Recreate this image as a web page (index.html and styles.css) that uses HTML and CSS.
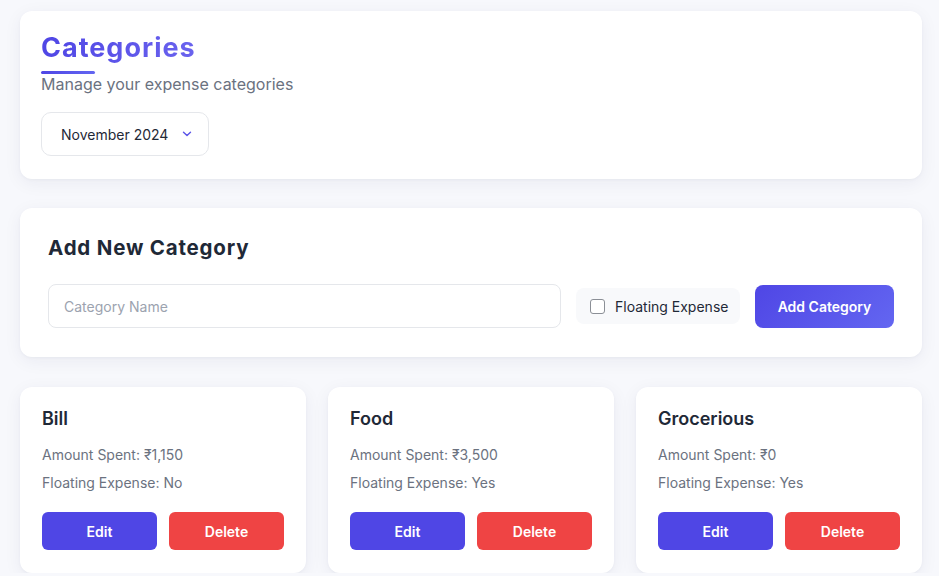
FILE: index.html
```html
<!DOCTYPE html>
<html lang="en">
<head>
<meta charset="utf-8">
<title>Categories</title>
<link rel="stylesheet" href="styles.css">
</head>
<body>
<main class="page">
  <section class="card header-card">
    <h1 class="page-title">Categories</h1>
    <div class="title-bar"></div>
    <p class="subtitle">Manage your expense categories</p>
    <div class="month-select">
      <span>November 2024</span>
      <svg class="chevron" width="10" height="6" viewBox="0 0 10 6"><path d="M1.5 1.2 L5 4.6 L8.5 1.2" fill="none" stroke="#5b54e8" stroke-width="1.4" stroke-linecap="round" stroke-linejoin="round"/></svg>
    </div>
  </section>

  <section class="card add-card">
    <h2 class="add-title">Add New Category</h2>
    <div class="add-row">
      <input class="name-input" type="text" placeholder="Category Name">
      <label class="float-toggle"><input type="checkbox" class="check"><span>Floating Expense</span></label>
      <button class="add-btn">Add Category</button>
    </div>
  </section>

  <section class="grid">
    <article class="card cat-card">
      <h3 class="cat-name">Bill</h3>
      <p class="cat-line">Amount Spent: ₹1,150</p>
      <p class="cat-line">Floating Expense: No</p>
      <div class="cat-actions"><button class="btn edit">Edit</button><button class="btn delete">Delete</button></div>
    </article>
    <article class="card cat-card">
      <h3 class="cat-name">Food</h3>
      <p class="cat-line">Amount Spent: ₹3,500</p>
      <p class="cat-line">Floating Expense: Yes</p>
      <div class="cat-actions"><button class="btn edit">Edit</button><button class="btn delete">Delete</button></div>
    </article>
    <article class="card cat-card">
      <h3 class="cat-name">Grocerious</h3>
      <p class="cat-line">Amount Spent: ₹0</p>
      <p class="cat-line">Floating Expense: Yes</p>
      <div class="cat-actions"><button class="btn edit">Edit</button><button class="btn delete">Delete</button></div>
    </article>
  </section>
</main>
</body>
</html>
```

FILE: styles.css
```css
* { box-sizing: border-box; }
html, body { margin: 0; padding: 0; }
body {
  background: #f7f8fc;
  font-family: Inter, "Noto Sans", "DejaVu Sans", sans-serif;
  color: #1f2937;
  overflow: hidden;
}
.page {
  width: 902px;
  margin: 0 0 0 20px;
  padding-top: 11px;
}
.card {
  background: #ffffff;
  border-radius: 12px;
  box-shadow: 0 4px 18px rgba(30, 41, 80, 0.06), 0 1px 3px rgba(30, 41, 80, 0.04);
}
.header-card {
  padding: 21px 21px 23px;
  margin-bottom: 29px;
}
.page-title {
  margin: 0;
  font-size: 27px;
  line-height: 32px;
  font-weight: 700;
  letter-spacing: 1px;
  background: linear-gradient(90deg, #4f46e5, #6a63ee);
  -webkit-background-clip: text;
  background-clip: text;
  color: transparent;
  display: inline-block;
}
.title-bar {
  width: 54px;
  height: 3px;
  margin-top: 7px;
  border-radius: 2px;
  background: linear-gradient(90deg, #4f46e5, #6366f1);
}
.subtitle {
  margin: 1px 0 0;
  font-size: 16px;
  line-height: 19px;
  color: #6b7280;
}
.month-select {
  margin-top: 18px;
  width: 168px;
  height: 44px;
  border: 1px solid #e5e7eb;
  border-radius: 10px;
  display: flex;
  align-items: center;
  justify-content: space-between;
  padding: 0 16px 0 19px;
  font-size: 14px;
  color: #1f2937;
}
.chevron { display: block; }

.add-card {
  padding: 28px 28px 29px;
  margin-bottom: 30px;
}
.add-title {
  margin: 0 0 24px;
  font-size: 20.5px;
  line-height: 24px;
  font-weight: 700;
  letter-spacing: 0.8px;
  color: #1f2937;
}
.add-row {
  display: flex;
  align-items: center;
  gap: 15px;
}
.name-input {
  flex: 1;
  min-width: 0;
  height: 44px;
  border: 1px solid #e5e7eb;
  border-radius: 8px;
  padding: 0 15px;
  font-family: inherit;
  font-size: 14px;
  color: #1f2937;
  outline: none;
  background: #fff;
}
.name-input::placeholder { color: #9ca3af; }
.float-toggle {
  flex: none;
  width: 164px;
  height: 36px;
  background: #f8f9fb;
  border-radius: 8px;
  display: flex;
  align-items: center;
  gap: 10px;
  padding: 0 0 0 14px;
  font-size: 14px;
  color: #1f2937;
  white-space: nowrap;
}
.check {
  -webkit-appearance: none;
  appearance: none;
  margin: 0;
  width: 15px;
  height: 15px;
  border: 1px solid #8b8f96;
  border-radius: 3px;
  background: #fff;
  flex: none;
}
.add-btn {
  flex: none;
  width: 139px;
  height: 43px;
  border: none;
  border-radius: 8px;
  background: linear-gradient(135deg, #4f46e5, #6366f1);
  color: #fff;
  font-family: inherit;
  font-size: 14px;
  font-weight: 600;
}

.grid {
  display: grid;
  grid-template-columns: repeat(3, 1fr);
  gap: 22px;
}
.cat-card {
  padding: 21px 22px 23px;
}
.cat-name {
  margin: 0 0 15px;
  font-size: 18px;
  line-height: 22px;
  font-weight: 600;
  color: #1f2937;
}
.cat-line {
  margin: 0 0 8px;
  font-size: 14px;
  line-height: 20px;
  color: #6b7280;
}
.cat-actions {
  margin-top: 19px;
  display: flex;
  gap: 12px;
}
.btn {
  flex: 1;
  height: 38px;
  border: none;
  border-radius: 6px;
  color: #fff;
  font-family: inherit;
  font-size: 14px;
  font-weight: 600;
}
.edit { background: #4f46e5; }
.delete { background: #ef4444; }
```
